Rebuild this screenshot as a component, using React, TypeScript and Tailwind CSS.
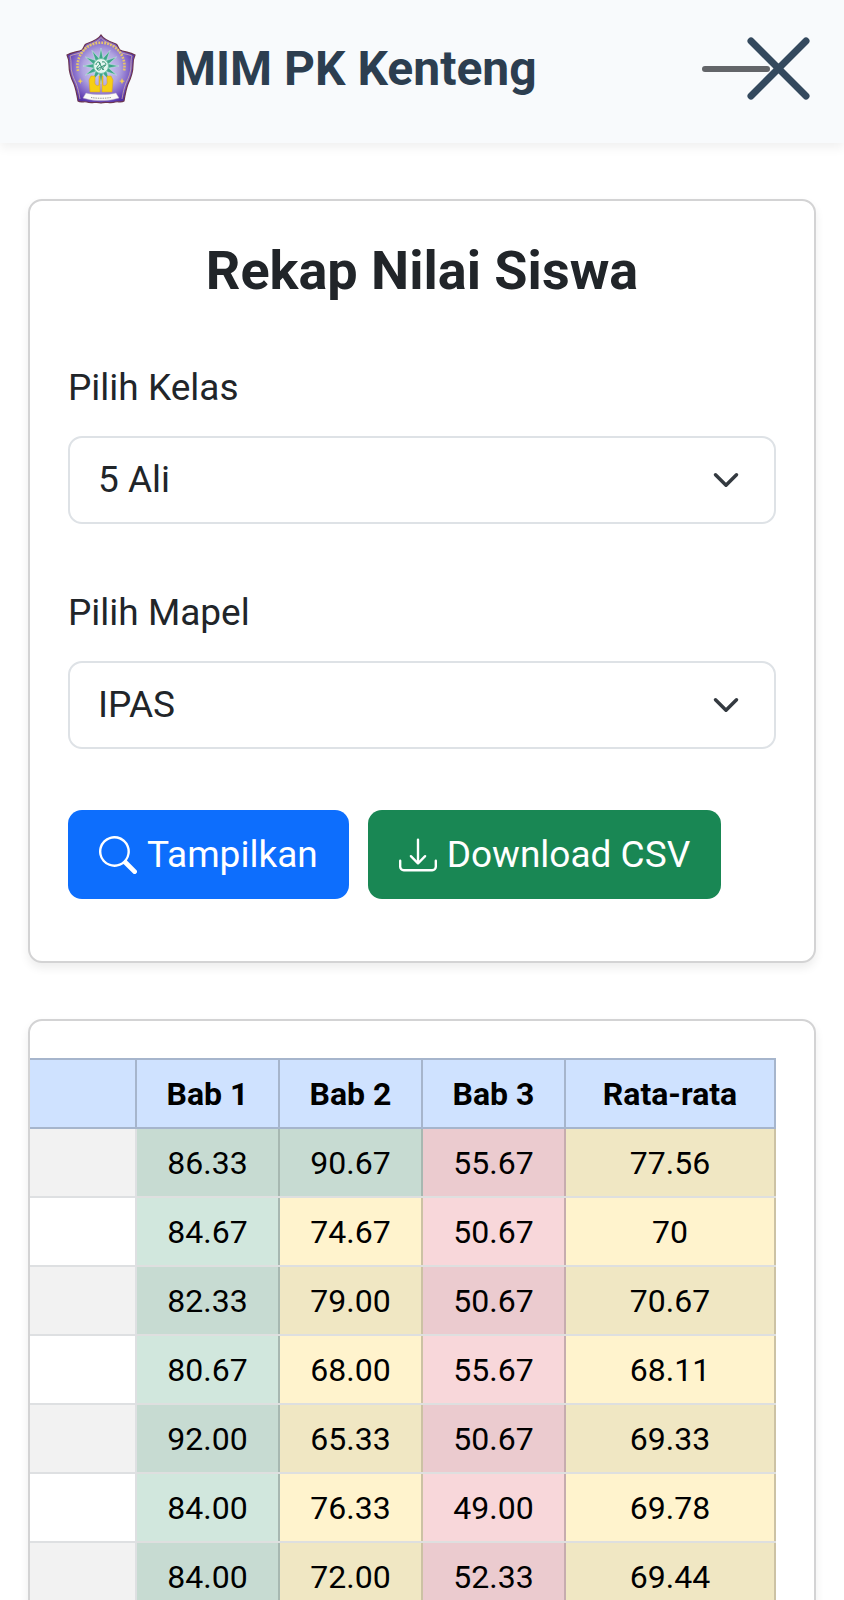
import { useState } from "react";
import { BsDownload, BsSearch } from "react-icons/bs";

type Tone = "green" | "yellow" | "red";

const TONES: Record<Tone, { odd: string; even: string }> = {
  green: { odd: "bg-[#c7dbd2] border-r-[#a7b8b1]", even: "bg-[#d1e7dd] border-r-[#a7b8b1]" },
  yellow: { odd: "bg-[#f0e7c3] border-r-[#ccc2a4]", even: "bg-[#fff3cd] border-r-[#ccc2a4]" },
  red: { odd: "bg-[#ebcbcf] border-r-[#c6acae]", even: "bg-[#f8d7da] border-r-[#c6acae]" },
};

const ROWS: string[][] = [
  ["86.33", "90.67", "55.67", "77.56"],
  ["84.67", "74.67", "50.67", "70"],
  ["82.33", "79.00", "50.67", "70.67"],
  ["80.67", "68.00", "55.67", "68.11"],
  ["92.00", "65.33", "50.67", "69.33"],
  ["84.00", "76.33", "49.00", "69.78"],
  ["84.00", "72.00", "52.33", "69.44"],
];

function toneOf(score: string): Tone {
  const n = Number(score);
  if (n >= 80) return "green";
  return n >= 60 ? "yellow" : "red";
}

function SchoolLogo() {
  const rays = Array.from({ length: 12 }, (_, i) => i * 30);
  return (
    <svg viewBox="0 0 70 70" className="size-[70px] shrink-0" aria-hidden="true">
      <defs>
        <radialGradient id="shield" cx="50%" cy="50%" r="54%">
          <stop offset="0" stopColor="#dcdcf6" />
          <stop offset="0.5" stopColor="#b0a4e0" />
          <stop offset="0.8" stopColor="#7a5cc4" />
          <stop offset="1" stopColor="#5230a6" />
        </radialGradient>
      </defs>
      <path
        d="M35 1C38 6 44 8 50 10C52 11 52 14 54 16C58 18 64 18 69 21C67 25 67 28 67 31C67 38 65 44 62 50C60 55 59 61 58 67C55 69 52 67 49 68C44 70 40 67 35 69C30 67 26 70 21 68C18 67 15 69 12 67C11 61 10 55 8 50C5 44 3 38 3 31C3 28 3 25 1 21C6 18 12 18 16 16C18 14 18 11 20 10C26 8 32 6 35 1Z"
        fill="url(#shield)"
        stroke="#6b3550"
        strokeWidth="1.2"
      />
      <path
        d="M35 3.500C38 8 44 10 49 12C51 13 51 16 53 18C57 20 62 20 66 22C65 25 65 28 65 31C65 38 63 43 60 49C58 54 57 59 56 65M35 3.500C32 8 26 10 21 12C19 13 19 16 17 18C13 20 8 20 4 22C5 25 5 28 5 31C5 38 7 43 10 49C12 54 13 59 14 65"
        fill="none"
        stroke="#e0bda0"
        strokeWidth="0.7"
      />
      <path d="M12 37A23.500 23.500 0 1 1 58 37" fill="none" stroke="#e6c56b" strokeWidth="2.600" strokeDasharray="1.800 1.200" />
      <g transform="translate(35 32)">
        {rays.map((angle) => (
          <path key={angle} d="M-2.200 -7L0 -18L2.200 -7Z" fill="#3fa58a" stroke="#c9ece2" strokeWidth="0.500" transform={`rotate(${angle})`} />
        ))}
        <circle r="7.500" fill="#e2f6ef" stroke="#6cbfa3" strokeWidth="1" />
        <path d="M-5 -1C-5 -4 -2 -5 -1 -3C0 -1 -5 0 -4 3C-3 5 0 4 0 2M1 -4C4 -5 6 -2 4 0C2 1 1 2 3 4M-2 -4L2 4M-4 3L4 -1" fill="none" stroke="#2b8c6c" strokeWidth="1" />
      </g>
      <path
        d="M23 46L25 42L29 42L29 47C28 50 31 53 33 51L33 42L34 42L34 58L24 58ZM47 46L45 42L41 42L41 47C42 50 39 53 37 51L37 42L36 42L36 58L46 58Z"
        fill="#f6cf14"
        stroke="#d79d1f"
        strokeWidth="0.500"
      />
      <path d="M20 59C27 61 43 61 50 59L53 64L49 65C42 67 28 67 21 65L17 64Z" fill="#fbfaf8" stroke="#b9abc9" strokeWidth="0.500" />
      <path d="M25 63.500C31 64.500 39 64.500 45 63.500" fill="none" stroke="#999" strokeWidth="1" strokeDasharray="1.500 0.800" />
      <path d="M14 44L15 46.500L17 47L15 48L14.500 50L13.500 48L11.500 47L13.500 46.500ZM56 44L57 46.500L59 47L57 48L56 50L55 48L53 47L55 46.500Z" fill="#f1cd55" />
    </svg>
  );
}

interface PickerProps {
  id: string;
  label: string;
  options: string[];
}

function Picker({ id, label, options }: PickerProps) {
  const [value, setValue] = useState(options[0]);
  return (
    <div className="flex flex-col gap-5">
      <label htmlFor={id} className="text-[37px] leading-[56px]">
        {label}
      </label>
      <div className="relative">
        <select
          id={id}
          value={value}
          onChange={(e) => setValue(e.target.value)}
          className="h-[88px] w-full appearance-none rounded-[14px] border-2 border-[#dee2e6] bg-white px-7 text-[37px] text-[#212529]"
        >
          {options.map((option) => (
            <option key={option}>{option}</option>
          ))}
        </select>
        <svg viewBox="0 0 16 16" className="pointer-events-none absolute top-[30px] right-9 size-7" aria-hidden="true">
          <path d="m2 5 6 6 6-6" fill="none" stroke="#343a40" strokeWidth="2" strokeLinecap="round" strokeLinejoin="round" />
        </svg>
      </div>
    </div>
  );
}

const CARD = "rounded-[14px] border-2 border-[#d3d3d4] bg-white shadow-[0_5px_10px_rgba(0,0,0,0.075)]";

export default function App() {
  return (
    <div className="min-h-screen bg-white font-[Roboto,sans-serif] text-[#212529]">
      <header className="flex h-[143px] items-center bg-[#f8fafc] pr-[34px] pb-[6px] pl-[66px] shadow-[0_5px_10px_rgba(0,0,0,0.06)]">
        <SchoolLogo />
        <span className="ml-[38px] text-[48px] font-bold whitespace-nowrap text-[#2c3e50]">MIM PK Kenteng</span>
        <button type="button" aria-label="Tutup menu" className="ml-auto">
          <svg viewBox="0 0 108 64" className="h-16 w-[108px]" fill="none" strokeLinecap="round">
            <path d="M3 32H65" stroke="#636569" strokeWidth="6" />
            <path d="M49 4L104 59M104 4L49 59" stroke="#34495e" strokeWidth="7" />
          </svg>
        </button>
      </header>

      <main className="flex flex-col gap-14 px-7 pt-14">
        <section className={`${CARD} px-[38px] pt-[38px] pb-[62px]`}>
          <h1 className="text-center text-[54px] leading-[64px] font-bold">Rekap Nilai Siswa</h1>
          <form className="mt-[57px] flex flex-col gap-[61px]" onSubmit={(e) => e.preventDefault()}>
            <Picker id="kelas" label="Pilih Kelas" options={["5 Ali"]} />
            <Picker id="mapel" label="Pilih Mapel" options={["IPAS"]} />
            <div className="flex flex-wrap gap-[19px] text-[37px] text-white">
              <button type="submit" className="flex h-[89px] items-center gap-[10px] rounded-[14px] bg-[#0d6efd] px-[31px]">
                <BsSearch className="size-[38px]" aria-hidden="true" />
                Tampilkan
              </button>
              <button type="button" className="flex h-[89px] items-center gap-[10px] rounded-[14px] bg-[#198754] px-[31px]">
                <BsDownload className="size-[38px]" aria-hidden="true" />
                Download CSV
              </button>
            </div>
          </form>
        </section>

        <section className={`${CARD} overflow-hidden pt-[37px] pr-[38px] pb-[38px]`}>
          <table className="w-full table-fixed border-collapse text-center text-[32px] leading-[48px] text-black">
            <thead>
              <tr className="h-[69px] bg-[#cfe2ff]">
                <th scope="col" aria-label="Nama" className="border-2 border-l-0 border-[#a6b5cc]" />
                <th scope="col" className="w-[143px] border-2 border-[#a6b5cc] font-bold">Bab 1</th>
                <th scope="col" className="w-[143px] border-2 border-[#a6b5cc] font-bold">Bab 2</th>
                <th scope="col" className="w-[143px] border-2 border-[#a6b5cc] font-bold">Bab 3</th>
                <th scope="col" className="w-[210px] border-2 border-[#a6b5cc] font-bold">Rata-rata</th>
              </tr>
            </thead>
            <tbody>
              {ROWS.map((row, r) => (
                <tr key={r} className="h-[69px]">
                  <td className={`border-r-2 border-b-2 border-[#dee0e2] ${r % 2 ? "bg-white" : "bg-[#f2f2f2]"}`} />
                  {row.map((score, c) => {
                    const tone = TONES[toneOf(score)];
                    return (
                      <td key={c} className={`border-r-2 border-b-2 border-b-[#dedfdf] ${r % 2 ? tone.even : tone.odd}`}>
                        {score}
                      </td>
                    );
                  })}
                </tr>
              ))}
            </tbody>
          </table>
        </section>
      </main>
    </div>
  );
}
